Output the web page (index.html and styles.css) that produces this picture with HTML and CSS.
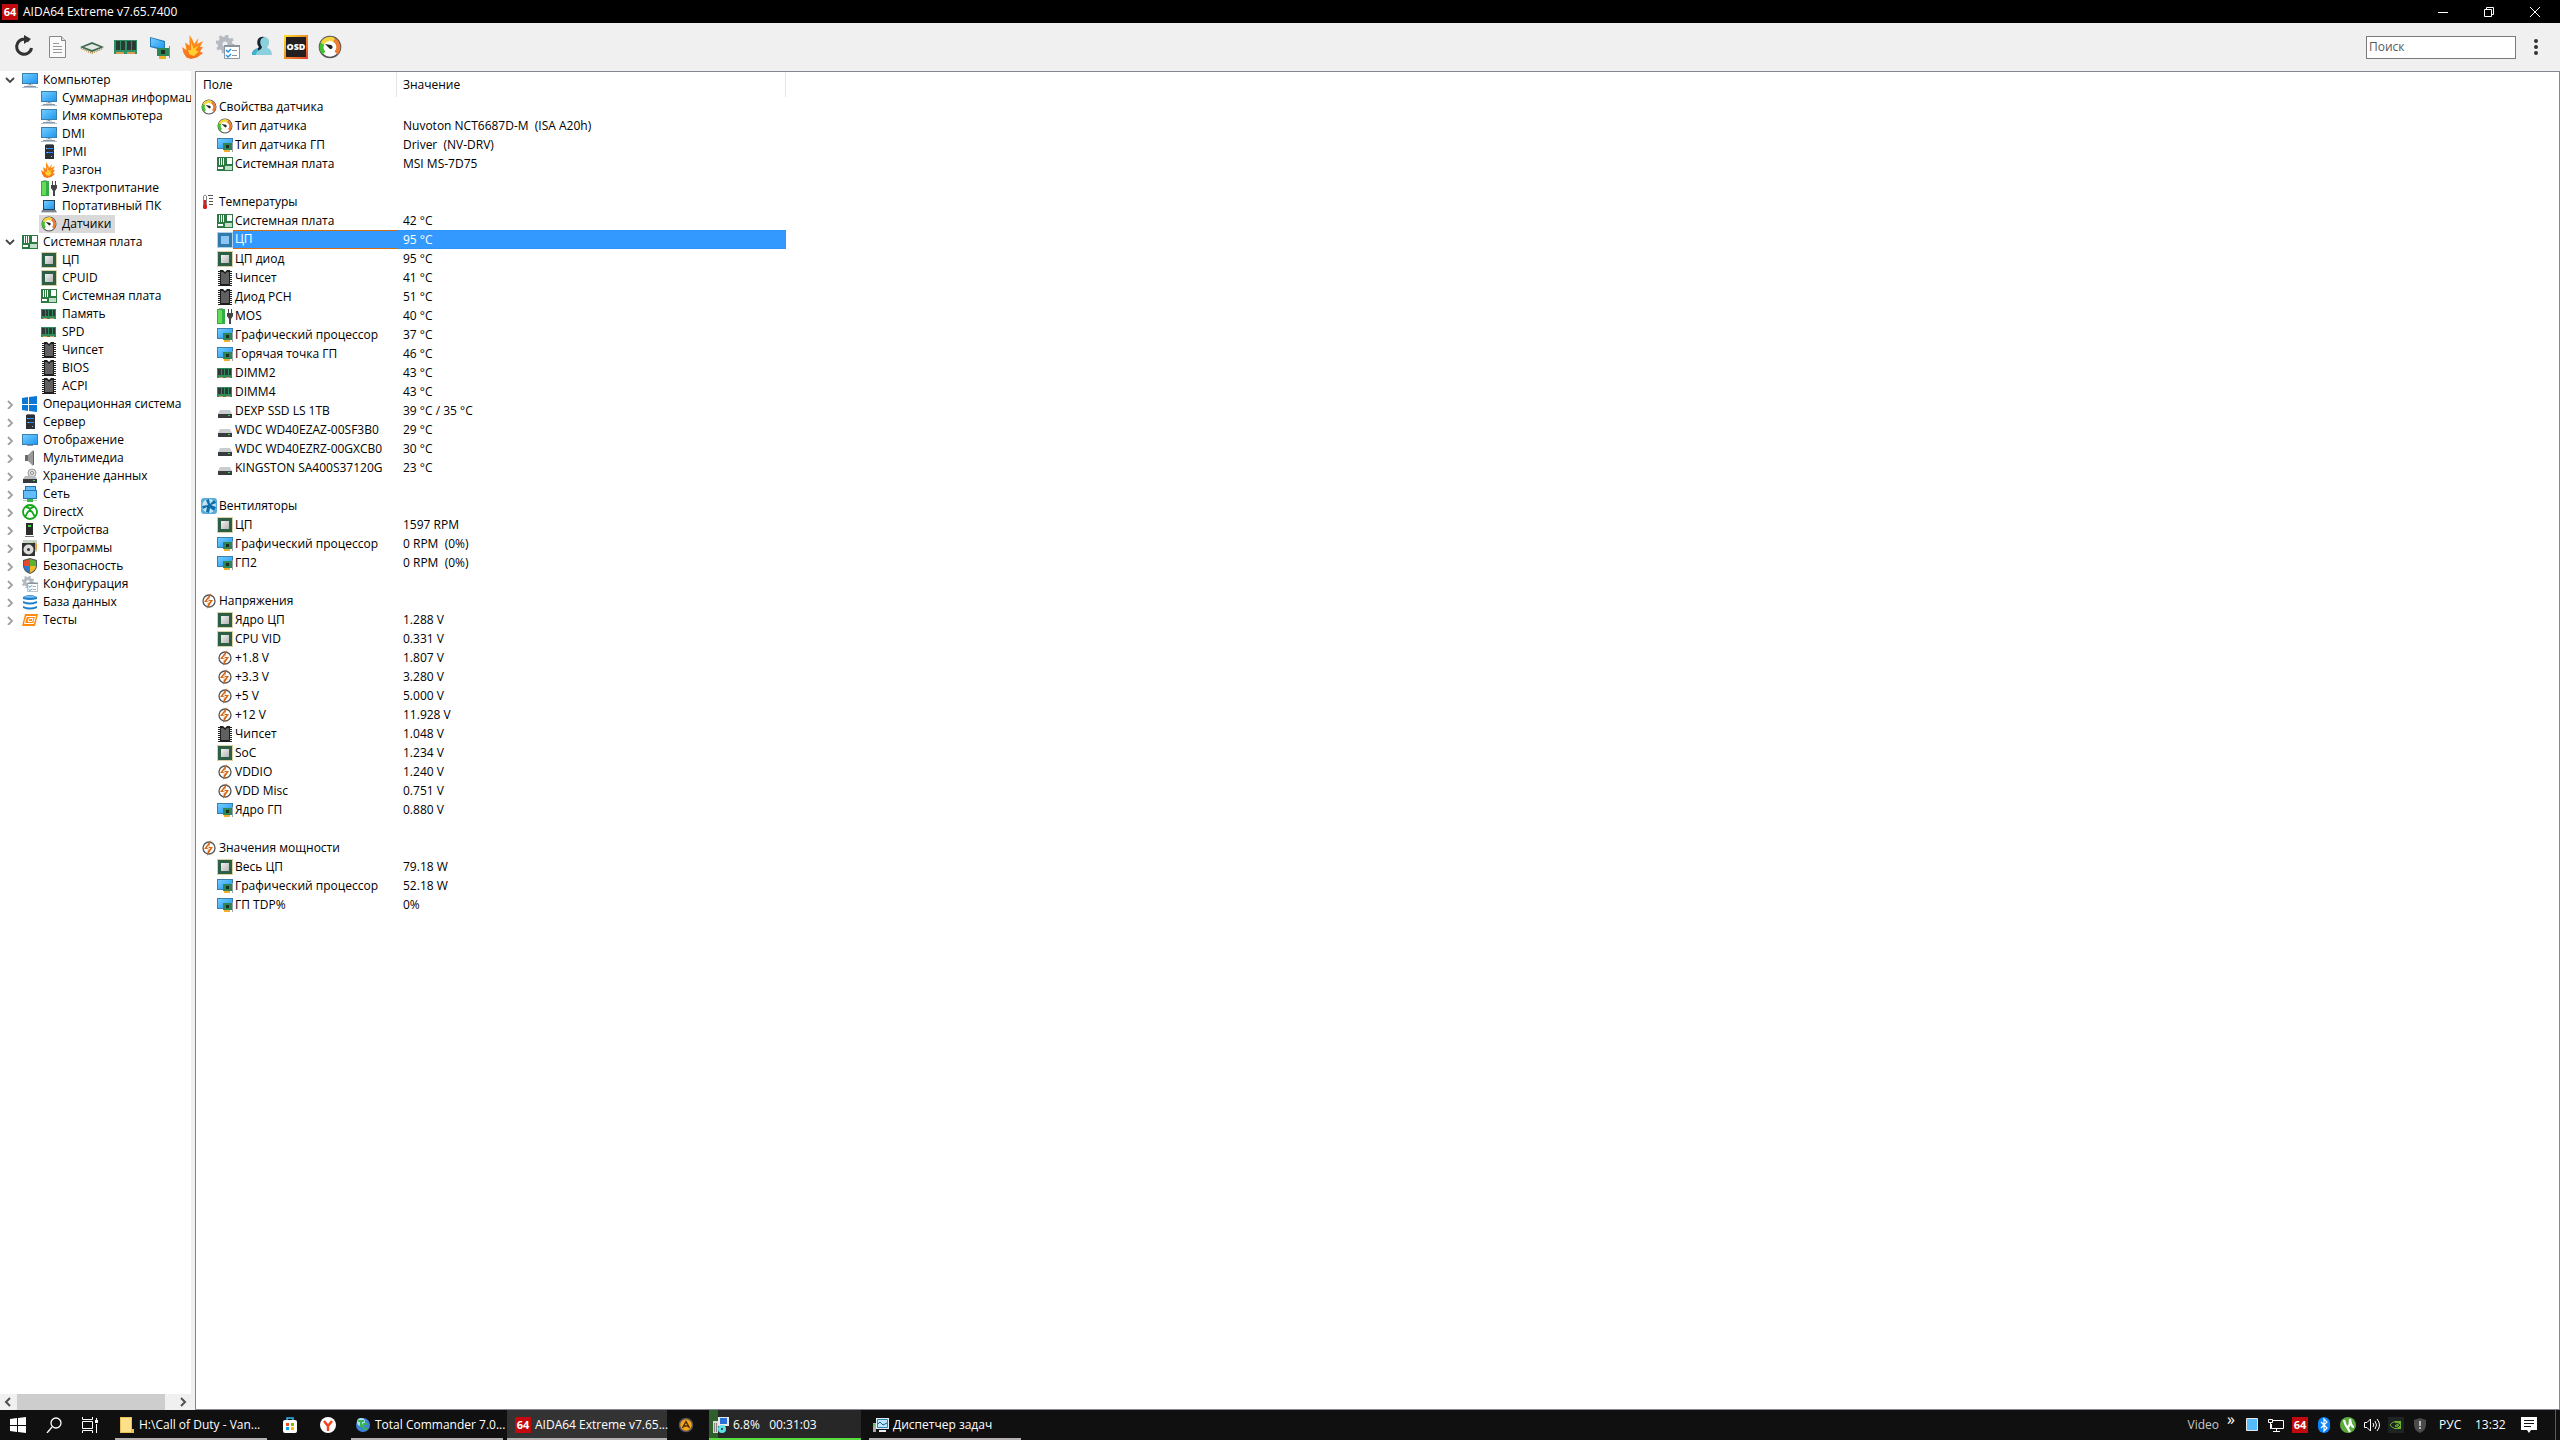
FILE: index.html
```
<!DOCTYPE html>
<html lang="ru">
  <head>
    <meta charset="utf-8">
    <title>AIDA64 Extreme v7.65.7400</title>
    <link rel="stylesheet" href="styles.css">
  </head>
  <body>
  <!-- icon sprite -->
  <svg class="sprite">
    <defs>
      <linearGradient id="g-screen" x1="0" y1="0" x2="1" y2="1"><stop offset="0" stop-color="#74ccff"/><stop offset="1" stop-color="#1e98f0"/></linearGradient>
      <linearGradient id="g-metal" x1="0" y1="0" x2="1" y2="1"><stop offset="0" stop-color="#f2f2f2"/><stop offset="1" stop-color="#b4b4b4"/></linearGradient>
      <linearGradient id="g-fire" x1="0" y1="0" x2="0" y2="1"><stop offset="0" stop-color="#ff9a1c"/><stop offset="1" stop-color="#f5701c"/></linearGradient>
      <linearGradient id="g-osd" x1="0" y1="0" x2="1" y2="1"><stop offset="0" stop-color="#ffe02a"/><stop offset="1" stop-color="#e03c28"/></linearGradient>
    </defs>
    <symbol id="i-pc" viewBox="0 0 16 16"><path fill="#3b7fae" d="M0 1h16v11H0z"/><path fill="url(#g-screen)" d="M1 2h14v9H1z"/><path fill="#d5dce2" d="M5 12h6v2H5z"/><path fill="#8e9aa6" d="M7 12h2v1H7zM2 14h12v1H2z"/><path fill="#b4c0ca" d="M0 15h16v1H0z"/></symbol>
    <symbol id="i-screen" viewBox="0 0 16 16"><path fill="#3b7fae" d="M0 2h16v11H0z"/><path fill="url(#g-screen)" d="M1 3h14v9H1z"/><path fill="#8e9aa6" d="M5 13h6v1H5z"/></symbol>
    <symbol id="i-server" viewBox="0 0 16 16"><path fill="#777" d="M5 0h7l1 2H4z"/><path fill="#2d3136" d="M4 1h9v14H4z"/><path fill="#2b8cff" d="M5 4h7v1H5zM5 8h7v1H5z"/><path fill="#8cc4ff" d="M5 4h1v1H5zM6 8h1v1H6zM10 12h1v1h-1z"/></symbol>
    <symbol id="i-fire" viewBox="0 0 16 16"><path fill="url(#g-fire)" d="M5 0l2 3 1 3 3-4-1 4 4-2-2 4 2 0-2 3 2 1-4 3-4 1-3-1-2-3-1-4 3 2-1-5 3 2z"/><path fill="#ffd02f" d="M6 5l2 4 3-2-2 3 2 1-3 3-3-1-1-3 2 0z"/></symbol>
    <symbol id="i-power" viewBox="0 0 16 16"><path fill="#b5b5b5" d="M2 0h4v2H2z"/><path fill="#35ad45" d="M0 1h8v15H0z"/><path fill="#62dc58" d="M1 2h4v13H1z"/><path fill="#444" d="M11 1h1v4h-1zM14 1h1v4h-1zM10 5h6v3l-2 3h-2l-2-3zM12 11h2v5h-2z"/></symbol>
    <symbol id="i-laptop" viewBox="0 0 16 16"><path fill="#26435c" d="M2 2h12v10H2z"/><path fill="url(#g-screen)" d="M3 3h10v8H3z"/><path fill="#7b8791" d="M1 12h14l1 3H0z"/><path fill="#ccd3d8" d="M0 14h16v1H0z"/></symbol>
    <symbol id="i-gauge" viewBox="0 0 24 24"><circle cx="12" cy="12" r="10.500" fill="#fff" stroke="#555" stroke-width="1.600"/><path fill="none" stroke="#42c02f" stroke-width="4" d="M6 18A8.200 8.200 0 0 1 4.500 8.500"/><path fill="none" stroke="#f5d53a" stroke-width="4" d="M4.500 8.500A8.200 8.200 0 0 1 16 5"/><path fill="none" stroke="#ef7a32" stroke-width="4" d="M16 5A8.200 8.200 0 0 1 18 18"/><path fill="#222" d="M7 9l6 1a2 2 0 1 1-1 4z"/></symbol>
    <symbol id="i-board" viewBox="0 0 16 16"><path fill="#2c7a42" d="M0 1h16v14H0z"/><path fill="#fff" d="M2 2h1v7H2zM4 2h1v7H4zM6 2h1v7H6zM10 2h5v6h-5zM1 11h5v2H1z"/><path fill="#c3dcc8" d="M8 10h7v4H8z"/></symbol>
    <symbol id="i-cpu" viewBox="0 0 16 16"><rect x=".5" y=".5" width="15" height="15" fill="none" stroke="#b9a24a" stroke-dasharray="1 1"/><path fill="#2c5f43" d="M1 1h14v14H1z"/><path fill="url(#g-metal)" d="M4 4h8v8H4z"/></symbol>
    <symbol id="i-cpu-active" viewBox="0 0 16 16"><rect x=".5" y=".5" width="15" height="15" fill="none" stroke="#5fa0d8" stroke-dasharray="1 1"/><path fill="#2f7ba9" d="M1 1h14v14H1z"/><path fill="#8fc4f6" d="M4 4h8v8H4z"/></symbol>
    <symbol id="i-ram" viewBox="0 0 16 16"><path fill="#2f8a5c" d="M0 3h15v10H0z"/><path fill="#2b3a35" d="M1 4h3v6H1zM5 4h2v6H5zM8 4h3v6H8zM12 4h2v6h-2z"/><path fill="#d99a55" d="M2 12h4v1H2zM9 12h4v1H9z"/></symbol>
    <symbol id="i-chip" viewBox="0 0 16 16"><path fill="none" stroke="#222" stroke-width="2" stroke-dasharray="1 1" d="M2 1v15M14 1v15"/><path fill="#1e1e1e" d="M3 0h3l2 2 2-2h3v16H3z"/><path fill="#606060" d="M4 2h2l2 2 2-2h2v12H4z"/></symbol>
    <symbol id="i-win" viewBox="0 0 16 16"><path fill="#0c78d6" d="M0 2l6-1v7H0zM7 1l8-1v8H7zM0 9h6v6l-6-1zM7 9h8v7l-8-1z"/></symbol>
    <symbol id="i-sound" viewBox="0 0 16 16"><path fill="#6b6b6b" d="M3 5h3v6H3z"/><path fill="#9a9a9a" d="M6 5l5-5v16l-5-5z"/><path fill="#5a6470" d="M11 1h1v14h-1z"/></symbol>
    <symbol id="i-storage" viewBox="0 0 16 16"><circle cx="10" cy="5" r="4" fill="#ddd" stroke="#999"/><circle cx="10" cy="5" r="1.500" fill="#fff" stroke="#888"/><path fill="#b9bdc0" d="M3 8h10l2 3H1z"/><path fill="#35393b" d="M1 11h14v4H1z"/><path fill="#3be03b" d="M11 12h2v1h-2z"/></symbol>
    <symbol id="i-hdd" viewBox="0 0 16 16"><path fill="#c9cdd0" d="M3 7h10l2 4H1z"/><path fill="#383c3f" d="M1 11h14v4H1z"/><path fill="#3be03b" d="M11 12h2v1h-2z"/></symbol>
    <symbol id="i-net" viewBox="0 0 16 16"><path fill="#2474ad" d="M3 0h11v4h1v9H1V4h2z"/><path fill="#62bdf8" d="M4 1h9v3H4zM2 5h12v7H2z"/><path fill="#3bb54a" d="M5 13h6v3H5z"/><path fill="#a8cfae" d="M1 14h4v1H1zM11 14h4v1h-4z"/></symbol>
    <symbol id="i-dx" viewBox="0 0 16 16"><circle cx="8" cy="8" r="7" fill="#fff" stroke="#14a61a" stroke-width="1.800"/><path fill="none" stroke="#14a61a" stroke-width="1.800" d="M3 13Q5 8 8 6Q11 8 13 13M4 3Q6 3 8 5Q10 3 12 3"/></symbol>
    <symbol id="i-device" viewBox="0 0 16 16"><path fill="#2c2c2c" d="M4 1h7v12H4z"/><path fill="#3be03b" d="M6 3h3v2H6z"/><path fill="#777" d="M3 14h9v1H3z"/></symbol>
    <symbol id="i-soft" viewBox="0 0 16 16"><path fill="#c8d8c8" d="M1 0h14v12H1z"/><path fill="#e8a23c" d="M11 1l4 3v6h-3z"/><path fill="#333" d="M0 3h13v13H0z"/><circle cx="6.500" cy="9.500" r="5" fill="#ddd"/><circle cx="6.500" cy="9.500" r="1.500" fill="#333"/></symbol>
    <symbol id="i-shield" viewBox="0 0 16 16"><path fill="#555" d="M8 0l7 2v6q0 5-7 8q-7-3-7-8V2z"/><path fill="#e5482d" d="M8 1v7H2V3z"/><path fill="#5cb531" d="M8 1v7h6V3z"/><path fill="#2a7bd4" d="M2 8h6v7q-6-3-6-7z"/><path fill="#f5b921" d="M8 8h6q0 4-6 7z"/></symbol>
    <symbol id="i-config" viewBox="0 0 24 24"><circle cx="9" cy="9" r="5" fill="none" stroke="#b4bac0" stroke-width="5"/><circle cx="9" cy="9" r="8" fill="none" stroke="#b4bac0" stroke-width="3" stroke-dasharray="3 3.280"/><path fill="#fff" stroke="#8b949c" d="M8.500 10.500h15v13h-15z"/><path fill="#8b949c" d="M8 10h16v2H8zM16 15h5v1h-5zM16 20h5v1h-5z"/><path fill="none" stroke="#2492e0" stroke-width="1.500" d="M10 15l2 2 3-3M10 20l2 2 3-3"/></symbol>
    <symbol id="i-db" viewBox="0 0 16 16"><path fill="#1c7fcb" d="M1 3q7-4 14 0v2q-7 2-14 0zM1 7q7 3 14 0v2q-7 3-14 0zM1 12q7 3 14 0v2q-7 3-14 0z"/><path fill="#75b9ee" d="M1 3q7-3 14 0q-7 2-14 0z"/></symbol>
    <symbol id="i-test" viewBox="0 0 16 16"><path fill="#ff8a0c" d="M3 2h13l-3 12H0z"/><path fill="none" stroke="#fff" d="M4.500 4.500h9l-2 7h-9z"/><path fill="none" stroke="#fff" d="M7 6.500h4l-1 3H6z"/></symbol>
    <symbol id="i-gpu" viewBox="0 0 16 16"><path fill="#3b7fae" d="M0 1h16v11H0z"/><path fill="url(#g-screen)" d="M1 2h14v9H1z"/><path fill="#2e8555" d="M6 6h9v7H6z"/><path fill="#1d2c24" d="M9 8h3v3H9z"/><path fill="#9ba3a8" d="M15 5h1v10h-1z"/><path fill="#efae2c" d="M7 13h6v2H7z"/></symbol>
    <symbol id="i-temp" viewBox="0 0 16 16"><path fill="#fff" stroke="#888" d="M2.500 11V2q1.500-2 3 0v9"/><path fill="#d81e1e" d="M3 6h2v5h1v3l-1 1H3l-1-1v-3h1z"/><path fill="#555" d="M7 1h5v1H7zM8 4h4v1H8zM8 7h4v1H8zM8 10h4v1H8z"/></symbol>
    <symbol id="i-fan" viewBox="0 0 16 16"><rect width="16" height="16" rx="3" fill="#58abd8"/><circle cx="8" cy="8" r="7" fill="#c4e3f4"/><path fill="#0b6fac" d="M7 7l-2-5 3-1 1 5 4-4 2 3-5 2 5 2-2 4-4-3-1 5-3-1 1-5-4 2-1-3z"/></symbol>
    <symbol id="i-volt" viewBox="0 0 16 16"><circle cx="8" cy="8" r="6" fill="#fff" stroke="#555" stroke-width="1.300"/><path fill="#d9640f" d="M10 0L3 9l4 0-1 7 6-9H8z"/><path fill="#fff" d="M8 5L5.500 8.200h2L7 11l2.500-3H7.500z"/></symbol>
    <symbol id="i-64" viewBox="0 0 16 16"><path fill="#c20a0e" d="M0 0h16v16H0z"/><text x="8" y="12" class="logo64">64</text></symbol>
    <symbol id="i-open" viewBox="0 0 10 10"><path fill="none" stroke="#444" stroke-width="1.800" d="M1 3l4 4 4-4"/></symbol>
    <symbol id="i-closed" viewBox="0 0 10 10"><path fill="none" stroke="#a0a0a0" stroke-width="1.800" d="M3 2l4 4-4 4"/></symbol>
  </svg>

  <header class="titlebar">
    <svg class="ico"><use href="#i-64"/></svg>
    <span class="title">AIDA64 Extreme v7.65.7400</span>
    <button class="winbtn" aria-label="Свернуть"><svg viewBox="0 0 10 10"><path d="M0 5.500h10"/></svg></button>
    <button class="winbtn" aria-label="Восстановить"><svg viewBox="0 0 10 10"><path d="M.5 2.500h7v7h-7zM2.500 2.500v-2h7v7h-2"/></svg></button>
    <button class="winbtn" aria-label="Закрыть"><svg viewBox="0 0 10 10"><path d="M0 0l10 10M10 0L0 10"/></svg></button>
  </header>

  <nav class="toolbar">
    <button class="tool" aria-label="Обновить"><svg viewBox="0 0 24 24"><path fill="none" stroke="#333" stroke-width="3" d="M17 6A7.500 7.500 0 1 0 19.500 13"/><path fill="#333" d="M12 0l7 4-7 5z"/></svg></button>
    <button class="tool" aria-label="Отчёт"><svg viewBox="0 0 24 24"><path fill="#fafafa" stroke="#888" d="M3.500 1.500h12l4 4v17h-16z"/><path fill="#ddd" stroke="#888" d="M15.500 1.500v4h4"/><path stroke="#999" d="M7 8.500h6M7 11.500h9M7 14.500h9M7 17.500h9"/></svg></button>
    <button class="tool" aria-label="ЦП"><svg viewBox="0 0 24 24"><path fill="none" stroke="#b08a3a" stroke-dasharray="1 1" stroke-width="2" d="M1 13l11 5 11-5"/><path fill="#3e6b51" d="M0 12l12-5 12 5-12 5z"/><path fill="#e6e9e7" d="M4 12l8-3 8 3-8 3z"/></svg></button>
    <button class="tool" aria-label="Память"><svg viewBox="0 0 24 24"><path fill="#2f9163" d="M0 5h23v14H0z"/><path fill="#2b3a35" d="M2 6h4v9H2zM7 6h4v9H7zM13 6h4v9h-4zM18 6h4v9h-4z"/><path fill="#d99a55" d="M2 17h8v2H2zM13 17h8v2h-8z"/></svg></button>
    <button class="tool" aria-label="Видео"><svg viewBox="0 0 24 24"><path fill="#2579b5" d="M2 2l15 4v10L2 12z"/><path fill="url(#g-screen)" d="M3 3l13 4v7L3 11z"/><path fill="#2e8555" d="M9 13h12v8H9z"/><path fill="#1d2c24" d="M13 15h4v4h-4z"/><path fill="#efae2c" d="M11 21h7v3h-7z"/><path fill="#888" d="M21 11h1v12h-1z"/></svg></button>
    <button class="tool" aria-label="Разгон"><svg><use href="#i-fire"/></svg></button>
    <button class="tool" aria-label="Настройки"><svg><use href="#i-config"/></svg></button>
    <button class="tool" aria-label="Пользователь"><svg viewBox="0 0 24 24"><path fill="#16242e" d="M2 20q0-5 5-6l2-2q-3-3-1-8 2-3 7-2v18z"/><path fill="#3bb4d4" d="M2 19q1-5 6-6v7H2z"/><path fill="#8bd0dd" d="M6 20q0-4 5-6l1-2q-3-4-1-8 2-2 4-2 5 1 4 7l-2 4q5 1 5 7z"/></svg></button>
    <button class="tool" aria-label="OSD"><svg viewBox="0 0 24 24"><path fill="url(#g-osd)" d="M0 0h24v24H0z"/><path fill="#231f20" d="M2 2h20v20H2z"/><text x="12" y="15" class="osd">OSD</text></svg></button>
    <button class="tool" aria-label="Датчики"><svg><use href="#i-gauge"/></svg></button>
    <input class="search" type="text" placeholder="Поиск" aria-label="Поиск">
    <button class="more" aria-label="Меню"><svg viewBox="0 0 4 16"><circle cx="2" cy="2" r="2"/><circle cx="2" cy="8" r="2"/><circle cx="2" cy="14" r="2"/></svg></button>
  </nav>

  <main class="main">
    <aside class="sidebar">
      <ul class="tree">
        <li><svg class="arrow"><use href="#i-open"/></svg><svg class="ico"><use href="#i-pc"/></svg><span>Компьютер</span></li>
        <li class="sub"><svg class="ico"><use href="#i-pc"/></svg><span class="long">Суммарная информация</span></li>
        <li class="sub"><svg class="ico"><use href="#i-pc"/></svg><span>Имя компьютера</span></li>
        <li class="sub"><svg class="ico"><use href="#i-pc"/></svg><span>DMI</span></li>
        <li class="sub"><svg class="ico"><use href="#i-server"/></svg><span>IPMI</span></li>
        <li class="sub"><svg class="ico"><use href="#i-fire"/></svg><span>Разгон</span></li>
        <li class="sub"><svg class="ico"><use href="#i-power"/></svg><span>Электропитание</span></li>
        <li class="sub"><svg class="ico"><use href="#i-laptop"/></svg><span>Портативный ПК</span></li>
        <li class="sub current"><svg class="ico"><use href="#i-gauge"/></svg><span>Датчики</span></li>
        <li><svg class="arrow"><use href="#i-open"/></svg><svg class="ico"><use href="#i-board"/></svg><span>Системная плата</span></li>
        <li class="sub"><svg class="ico"><use href="#i-cpu"/></svg><span>ЦП</span></li>
        <li class="sub"><svg class="ico"><use href="#i-cpu"/></svg><span>CPUID</span></li>
        <li class="sub"><svg class="ico"><use href="#i-board"/></svg><span>Системная плата</span></li>
        <li class="sub"><svg class="ico"><use href="#i-ram"/></svg><span>Память</span></li>
        <li class="sub"><svg class="ico"><use href="#i-ram"/></svg><span>SPD</span></li>
        <li class="sub"><svg class="ico"><use href="#i-chip"/></svg><span>Чипсет</span></li>
        <li class="sub"><svg class="ico"><use href="#i-chip"/></svg><span>BIOS</span></li>
        <li class="sub"><svg class="ico"><use href="#i-chip"/></svg><span>ACPI</span></li>
        <li><svg class="arrow"><use href="#i-closed"/></svg><svg class="ico"><use href="#i-win"/></svg><span>Операционная система</span></li>
        <li><svg class="arrow"><use href="#i-closed"/></svg><svg class="ico"><use href="#i-server"/></svg><span>Сервер</span></li>
        <li><svg class="arrow"><use href="#i-closed"/></svg><svg class="ico"><use href="#i-screen"/></svg><span>Отображение</span></li>
        <li><svg class="arrow"><use href="#i-closed"/></svg><svg class="ico"><use href="#i-sound"/></svg><span>Мультимедиа</span></li>
        <li><svg class="arrow"><use href="#i-closed"/></svg><svg class="ico"><use href="#i-storage"/></svg><span>Хранение данных</span></li>
        <li><svg class="arrow"><use href="#i-closed"/></svg><svg class="ico"><use href="#i-net"/></svg><span>Сеть</span></li>
        <li><svg class="arrow"><use href="#i-closed"/></svg><svg class="ico"><use href="#i-dx"/></svg><span>DirectX</span></li>
        <li><svg class="arrow"><use href="#i-closed"/></svg><svg class="ico"><use href="#i-device"/></svg><span>Устройства</span></li>
        <li><svg class="arrow"><use href="#i-closed"/></svg><svg class="ico"><use href="#i-soft"/></svg><span>Программы</span></li>
        <li><svg class="arrow"><use href="#i-closed"/></svg><svg class="ico"><use href="#i-shield"/></svg><span>Безопасность</span></li>
        <li><svg class="arrow"><use href="#i-closed"/></svg><svg class="ico"><use href="#i-config"/></svg><span>Конфигурация</span></li>
        <li><svg class="arrow"><use href="#i-closed"/></svg><svg class="ico"><use href="#i-db"/></svg><span>База данных</span></li>
        <li><svg class="arrow"><use href="#i-closed"/></svg><svg class="ico"><use href="#i-test"/></svg><span>Тесты</span></li>
      </ul>
      <div class="hscroll">
        <button aria-label="Влево"><svg viewBox="0 0 10 10"><path d="M6 1L2 5l4 4"/></svg></button>
        <div class="thumb"></div>
        <button aria-label="Вправо"><svg viewBox="0 0 10 10"><path d="M3 1l4 4-4 4"/></svg></button>
      </div>
    </aside>

    <section class="panel">
      <table class="list">
        <thead><tr><th class="field">Поле</th><th class="value">Значение</th></tr></thead>
        <tbody>
        <tr class="group"><td><div><svg class="ico"><use href="#i-gauge"/></svg><span>Свойства датчика</span></div></td><td></td></tr>
        <tr><td><div><svg class="ico"><use href="#i-gauge"/></svg><span>Тип датчика</span></div></td><td>Nuvoton NCT6687D-M&nbsp; (ISA A20h)</td></tr>
        <tr><td><div><svg class="ico"><use href="#i-gpu"/></svg><span>Тип датчика ГП</span></div></td><td>Driver&nbsp; (NV-DRV)</td></tr>
        <tr><td><div><svg class="ico"><use href="#i-board"/></svg><span>Системная плата</span></div></td><td>MSI MS-7D75</td></tr>
        </tbody>
        <tbody>
        <tr class="group"><td><div><svg class="ico"><use href="#i-temp"/></svg><span>Температуры</span></div></td><td></td></tr>
        <tr><td><div><svg class="ico"><use href="#i-board"/></svg><span>Системная плата</span></div></td><td>42 °C</td></tr>
        <tr class="selected"><td><div><svg class="ico"><use href="#i-cpu-active"/></svg><span>ЦП</span></div></td><td>95 °C</td></tr>
        <tr><td><div><svg class="ico"><use href="#i-cpu"/></svg><span>ЦП диод</span></div></td><td>95 °C</td></tr>
        <tr><td><div><svg class="ico"><use href="#i-chip"/></svg><span>Чипсет</span></div></td><td>41 °C</td></tr>
        <tr><td><div><svg class="ico"><use href="#i-chip"/></svg><span>Диод PCH</span></div></td><td>51 °C</td></tr>
        <tr><td><div><svg class="ico"><use href="#i-power"/></svg><span>MOS</span></div></td><td>40 °C</td></tr>
        <tr><td><div><svg class="ico"><use href="#i-gpu"/></svg><span>Графический процессор</span></div></td><td>37 °C</td></tr>
        <tr><td><div><svg class="ico"><use href="#i-gpu"/></svg><span>Горячая точка ГП</span></div></td><td>46 °C</td></tr>
        <tr><td><div><svg class="ico"><use href="#i-ram"/></svg><span>DIMM2</span></div></td><td>43 °C</td></tr>
        <tr><td><div><svg class="ico"><use href="#i-ram"/></svg><span>DIMM4</span></div></td><td>43 °C</td></tr>
        <tr><td><div><svg class="ico"><use href="#i-hdd"/></svg><span>DEXP SSD LS 1TB</span></div></td><td>39 °C / 35 °C</td></tr>
        <tr><td><div><svg class="ico"><use href="#i-hdd"/></svg><span>WDC WD40EZAZ-00SF3B0</span></div></td><td>29 °C</td></tr>
        <tr><td><div><svg class="ico"><use href="#i-hdd"/></svg><span>WDC WD40EZRZ-00GXCB0</span></div></td><td>30 °C</td></tr>
        <tr><td><div><svg class="ico"><use href="#i-hdd"/></svg><span>KINGSTON SA400S37120G</span></div></td><td>23 °C</td></tr>
        </tbody>
        <tbody>
        <tr class="group"><td><div><svg class="ico"><use href="#i-fan"/></svg><span>Вентиляторы</span></div></td><td></td></tr>
        <tr><td><div><svg class="ico"><use href="#i-cpu"/></svg><span>ЦП</span></div></td><td>1597 RPM</td></tr>
        <tr><td><div><svg class="ico"><use href="#i-gpu"/></svg><span>Графический процессор</span></div></td><td>0 RPM&nbsp; (0%)</td></tr>
        <tr><td><div><svg class="ico"><use href="#i-gpu"/></svg><span>ГП2</span></div></td><td>0 RPM&nbsp; (0%)</td></tr>
        </tbody>
        <tbody>
        <tr class="group"><td><div><svg class="ico"><use href="#i-volt"/></svg><span>Напряжения</span></div></td><td></td></tr>
        <tr><td><div><svg class="ico"><use href="#i-cpu"/></svg><span>Ядро ЦП</span></div></td><td>1.288 V</td></tr>
        <tr><td><div><svg class="ico"><use href="#i-cpu"/></svg><span>CPU VID</span></div></td><td>0.331 V</td></tr>
        <tr><td><div><svg class="ico"><use href="#i-volt"/></svg><span>+1.8 V</span></div></td><td>1.807 V</td></tr>
        <tr><td><div><svg class="ico"><use href="#i-volt"/></svg><span>+3.3 V</span></div></td><td>3.280 V</td></tr>
        <tr><td><div><svg class="ico"><use href="#i-volt"/></svg><span>+5 V</span></div></td><td>5.000 V</td></tr>
        <tr><td><div><svg class="ico"><use href="#i-volt"/></svg><span>+12 V</span></div></td><td>11.928 V</td></tr>
        <tr><td><div><svg class="ico"><use href="#i-chip"/></svg><span>Чипсет</span></div></td><td>1.048 V</td></tr>
        <tr><td><div><svg class="ico"><use href="#i-cpu"/></svg><span>SoC</span></div></td><td>1.234 V</td></tr>
        <tr><td><div><svg class="ico"><use href="#i-volt"/></svg><span>VDDIO</span></div></td><td>1.240 V</td></tr>
        <tr><td><div><svg class="ico"><use href="#i-volt"/></svg><span>VDD Misc</span></div></td><td>0.751 V</td></tr>
        <tr><td><div><svg class="ico"><use href="#i-gpu"/></svg><span>Ядро ГП</span></div></td><td>0.880 V</td></tr>
        </tbody>
        <tbody>
        <tr class="group"><td><div><svg class="ico"><use href="#i-volt"/></svg><span>Значения мощности</span></div></td><td></td></tr>
        <tr><td><div><svg class="ico"><use href="#i-cpu"/></svg><span>Весь ЦП</span></div></td><td>79.18 W</td></tr>
        <tr><td><div><svg class="ico"><use href="#i-gpu"/></svg><span>Графический процессор</span></div></td><td>52.18 W</td></tr>
        <tr><td><div><svg class="ico"><use href="#i-gpu"/></svg><span>ГП TDP%</span></div></td><td>0%</td></tr>
        </tbody>
      </table>
    </section>
  </main>

  <footer class="taskbar">
    <div class="system">
      <button class="pin" aria-label="Пуск"><svg class="ico" viewBox="0 0 16 16"><path fill="#fff" d="M0 2l7-1v7H0zM8 1l8-1v8H8zM0 9h7v6l-7-1zM8 9h8v7l-8-1z"/></svg></button>
      <button class="pin" aria-label="Поиск"><svg class="ico" viewBox="0 0 16 16"><circle cx="10" cy="6" r="5" fill="none" stroke="#fff" stroke-width="1.300"/><path stroke="#fff" stroke-width="1.300" d="M6 10l-5 6"/></svg></button>
      <button class="pin" aria-label="Представление задач"><svg class="ico" viewBox="0 0 16 16"><path fill="none" stroke="#fff" d="M.5 0v2.500h10V0M.5 4.500h10v7H.5zM.5 16v-2.500h10V16M14.500 1v2M14.500 7v9"/><path fill="#fff" d="M13 3h3v3h-3z"/></svg></button>
    </div>
    <button class="task"><svg class="ico" viewBox="0 0 16 16"><path fill="#e8c257" d="M1 0h12v12h2v4H1z"/><path fill="#ffe08a" d="M2 1h10v14H2z"/></svg><span>H:\Call of Duty - Van...</span></button>
    <button class="pin" aria-label="Магазин"><svg class="ico" viewBox="0 0 16 16"><path fill="none" stroke="#35b6f2" stroke-width="1.500" d="M5 3V1h6v2"/><rect x="1" y="3" width="14" height="13" rx="2" fill="#fff"/><path fill="#f25022" d="M4 6h3v3H4z"/><path fill="#7fba00" d="M9 6h3v3H9z"/><path fill="#00a4ef" d="M4 10h3v3H4z"/><path fill="#ffb900" d="M9 10h3v3H9z"/></svg></button>
    <button class="pin" aria-label="Яндекс"><svg class="ico" viewBox="0 0 16 16"><circle cx="8" cy="8" r="8" fill="#fff"/><path fill="none" stroke="#fb3f1d" stroke-width="2.400" d="M4 4l4 5v5M12 4L8 9"/></svg></button>
    <button class="task"><svg class="ico" viewBox="0 0 16 16"><circle cx="8" cy="8" r="7" fill="#3f82d6"/><circle cx="6" cy="5" r="4" fill="#b2d8fa"/><path fill="none" stroke="#35b74a" stroke-width="2" d="M3 4h6M6 4v6M12 7q-4-1-4 2t4 3"/></svg><span>Total Commander 7.0...</span></button>
    <button class="task active"><svg class="ico"><use href="#i-64"/></svg><span>AIDA64 Extreme v7.65...</span></button>
    <button class="pin" aria-label="AIMP"><svg class="ico" viewBox="0 0 16 16"><circle cx="8" cy="8" r="6.500" fill="#f9a51b" stroke="#555" stroke-width="1.500"/><path fill="none" stroke="#4a3000" stroke-width="1.500" d="M4.500 11L8 4.500l3.500 6.500M6 9h4"/></svg></button>
    <button class="task progress"><svg class="ico" viewBox="0 0 16 16"><path fill="#d8d8d8" d="M0 4h5v12H0z"/><path fill="#888" d="M1 6h1v9H1zM3 6h1v9H3z"/><path fill="#e8e8e8" d="M5 0h11v9H5z"/><path fill="#2a6fd8" d="M7 1h7v6H7z"/><circle cx="9" cy="12" r="4" fill="#5fe0e8"/><circle cx="9" cy="12" r="1" fill="#222"/></svg><span>6.8%&nbsp;&nbsp; 00:31:03</span></button>
    <button class="task"><svg class="ico" viewBox="0 0 16 16"><path fill="#aaa" d="M0 6h3v9H0z"/><path fill="#4ec94e" d="M0 7h2v2H0z"/><path fill="#e8eef2" d="M3 1h13v11H3zM6 13h7v2H6z"/><path fill="#bfe6fa" stroke="#2784b8" d="M4.500 2.500h10v8h-10z"/><path fill="none" stroke="#135e91" d="M5 7l2-2 3 3 4-2"/></svg><span>Диспетчер задач</span></button>

    <div class="tray">
      <span class="video">Video</span><span class="chevrons">»</span>
      <button class="tri" aria-label="Индикатор"><svg class="ico" viewBox="0 0 16 16"><path fill="#55bdff" stroke="#e6e6e6" d="M2.500 1.500h11v12h-11z"/></svg></button>
      <button class="tri" aria-label="Сеть"><svg class="ico" viewBox="0 0 16 16"><path fill="none" stroke="#fff" d="M5 3.500h10.500v8H3.500V7M8.500 12v3M5 14.500h7M.5 2.500h4v3h-4zM2.500 6v6"/></svg></button>
      <button class="tri" aria-label="AIDA64"><svg class="ico"><use href="#i-64"/></svg></button>
      <button class="tri" aria-label="Bluetooth"><svg class="ico" viewBox="0 0 16 16"><rect x="2" width="12" height="16" rx="6" fill="#0a84ff"/><path fill="none" stroke="#fff" stroke-width="1.200" d="M5 5l6 6-3 3V2l3 3-6 6"/></svg></button>
      <button class="tri" aria-label="uTorrent"><svg class="ico" viewBox="0 0 16 16"><circle cx="8" cy="8" r="8" fill="#5cab3e"/><path fill="none" stroke="#fff" stroke-width="2.200" d="M4 3q2 8 4 7t2-8q1 8 4 8M7 10l3 5"/></svg></button>
      <button class="tri" aria-label="Громкость"><svg class="ico" viewBox="0 0 16 16"><path fill="none" stroke="#fff" d="M.5 5.500H3l3.500-3.500v12L3 10.500H.5zM9 6q1.500 2 0 4M11 4q3 4 0 8M13 2q5 6 0 12"/></svg></button>
      <button class="tri" aria-label="NVIDIA"><svg class="ico" viewBox="0 0 16 16"><path fill="#1f2423" d="M0 0h16v16H0z"/><path fill="#69b42d" d="M7 4h6v8H7z"/><path fill="none" stroke="#69b42d" d="M7 4.500Q4 5 2 8q2 3 5 3.500"/><path fill="none" stroke="#1f2423" d="M7 6.500q3-1 5 1.500-2 3-5 2.500-2-2 0-3 2 0 2 1"/></svg></button>
      <button class="tri" aria-label="Защита"><svg class="ico" viewBox="0 0 16 16"><path fill="#4a4a4a" d="M8 1l6 2v5q0 5-6 8-6-3-6-8V3z"/><path fill="#bbb" d="M7 4h2v5H7zM7 10h2v2H7z"/></svg></button>
      <span class="lang">РУС</span>
      <span class="clock">13:32</span>
      <button class="notify" aria-label="Уведомления"><svg class="ico" viewBox="0 0 16 16"><path fill="#fff" d="M0 0h16v13h-6l-2 3-2-3H0z"/><path stroke="#111" d="M3 3.500h10M3 6.500h10M3 9.500h7"/></svg></button>
    </div>
  </footer>
  </body>
</html>
```
FILE: styles.css
```
* {
  box-sizing: border-box;
}

body {
  display: flex;
  flex-direction: column;
  height: 100vh;
  margin: 0;
  overflow: hidden;
  background: #f0f0f0;
  color: #000;
  font: 12px/16px "Open Sans", "Noto Sans", sans-serif;
}

button {
  display: flex;
  align-items: center;
  justify-content: center;
  padding: 0;
  border: 0;
  background: none;
  color: inherit;
  font: inherit;
}

svg {
  display: block;
}

.sprite {
  position: absolute;
  width: 0;
  height: 0;
}

.ico {
  flex: none;
  width: 16px;
  height: 16px;
}

.logo64 {
  fill: #fff;
  font: bold 11px "Open Sans", sans-serif;
  text-anchor: middle;
}

/* title bar */
.titlebar {
  display: flex;
  flex: none;
  align-items: center;
  height: 23px;
  padding: 0 2px;
  background: #000;
  color: #fff;
}

.title {
  flex: 1;
  padding-left: 5px;
}

.winbtn {
  width: 46px;
  height: 23px;
}

.winbtn svg {
  width: 10px;
  height: 10px;
  overflow: visible;
  fill: none;
  stroke: #fff;
}

/* toolbar */
.toolbar {
  display: flex;
  flex: none;
  align-items: center;
  height: 48px;
  padding: 0 14px 0 7px;
}

.tool {
  width: 34px;
  height: 34px;
}

.tool svg {
  width: 24px;
  height: 24px;
}

.osd {
  fill: #fff;
  font: 800 9px "Open Sans", sans-serif;
  text-anchor: middle;
}

.search {
  width: 150px;
  height: 23px;
  margin-left: auto;
  padding: 0 2px 2px;
  border: 1px solid #7a7a7a;
  background: #fff;
  font: inherit;
}

.search::placeholder {
  color: #5a5a5a;
}

.more {
  width: 20px;
  height: 24px;
  margin-left: 10px;
}

.more svg {
  width: 4px;
  height: 16px;
  fill: #333;
}

/* main area */
.main {
  display: flex;
  flex: 1;
  min-height: 0;
}

.sidebar {
  display: flex;
  flex: none;
  flex-direction: column;
  width: 191px;
  margin-right: 4px;
  background: #fff;
}

.tree {
  flex: 1;
  min-height: 0;
  margin: 0;
  padding: 0;
  overflow: hidden;
  list-style: none;
}

.tree li {
  display: flex;
  align-items: center;
  height: 18px;
  padding-left: 5px;
  white-space: nowrap;
}

.tree .sub {
  padding-left: 41px;
}

.tree span {
  padding: 1px 4px 1px 5px;
}

.arrow {
  flex: none;
  width: 10px;
  height: 10px;
  margin-right: 7px;
}

.tree .current::before {
  width: 2px;
  height: 18px;
  margin-left: -2px;
  background: #d9d9d9;
  content: '';
}

.current .ico {
  height: 18px;
  background: #d9d9d9;
}

.current span {
  background: #d9d9d9;
}

.hscroll {
  display: flex;
  flex: none;
  height: 16px;
  background: #f0f0f0;
}

.hscroll button {
  width: 17px;
}

.hscroll svg {
  width: 10px;
  height: 10px;
  fill: none;
  stroke: #505050;
  stroke-width: 2;
}

.thumb {
  flex: 1;
  margin-right: 9px;
  background: #cdcdcd;
}

.panel {
  flex: 1;
  min-width: 0;
  border: 1px solid #828790;
  background: #fff;
}

/* sensor list */
.list {
  border-collapse: separate;
  border-spacing: 0;
  table-layout: fixed;
  width: 590px;
  white-space: nowrap;
}

.list th {
  height: 25px;
  padding: 0 7px;
  border-right: 1px solid #e5e5e5;
  font-weight: normal;
  text-align: left;
}

.list .field {
  width: 201px;
}

.list td {
  height: 19px;
  padding: 0;
}

.list td + td {
  padding-left: 6px;
}

.list .value {
  padding-left: 6px;
}

.list div {
  display: flex;
  align-items: center;
  height: 19px;
  padding-left: 21px;
}

.list .group div {
  padding-left: 5px;
}

.list span {
  flex: 1;
  padding-left: 2px;
}

.list tbody + tbody::before {
  display: table-row;
  height: 19px;
  content: '';
}

.selected span,
.selected td + td {
  height: 19px;
  border: 1px dotted #c96a12;
  background: #3399ff;
  color: #fff;
}

.selected span {
  padding-left: 1px;
  border-right: 0;
}

.selected td + td {
  border-left: 0;
}

/* taskbar */
.taskbar {
  display: flex;
  flex: none;
  height: 30px;
  background: #101010;
  color: #fff;
}

.system {
  display: flex;
  width: 111px;
}

.pin {
  width: 38px;
}

.system .pin {
  width: 36px;
}

.task {
  justify-content: flex-start;
  width: 152px;
  margin: 0 4px;
  padding: 2px 4px 0;
  border-bottom: 2px solid #b5b1b1;
  white-space: nowrap;
}

.task span {
  padding-left: 4px;
}

.active {
  width: 160px;
  margin: 0;
  padding-left: 8px;
  background: #333;
}

.progress {
  border-color: #5bdc3e;
  background: linear-gradient(90deg, #2f5f2a 9px, #272727 9px);
}

.tray {
  display: flex;
  align-items: center;
  margin-left: auto;
  padding-right: 4px;
}

.video {
  color: #c8c8c8;
}

.chevrons {
  width: 21px;
  padding: 0 0 12px 8px;
  font-size: 16px;
}

.tri {
  width: 24px;
  height: 30px;
}

.lang {
  width: 43px;
  padding-left: 7px;
}

.clock {
  width: 27px;
}

.notify {
  width: 54px;
  height: 30px;
  border-right: 1px solid #5a5a5a;
}
```
